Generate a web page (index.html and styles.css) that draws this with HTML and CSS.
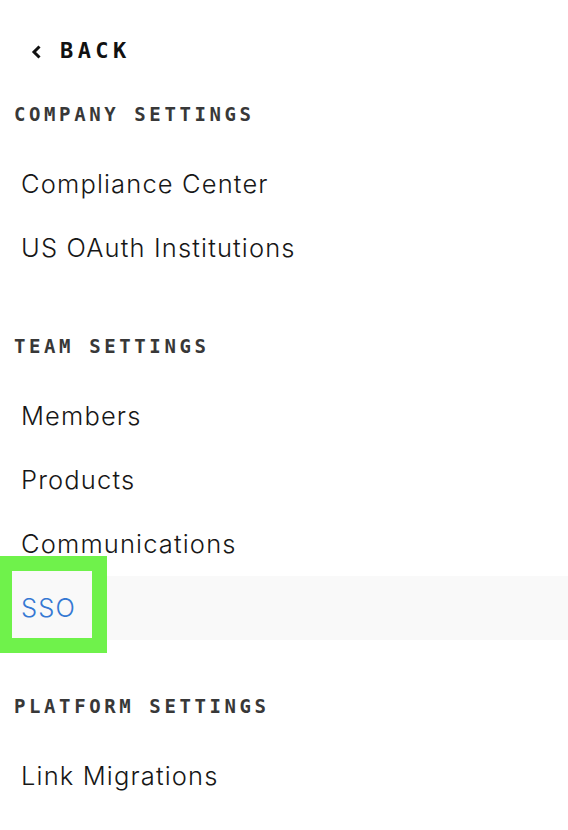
FILE: index.html
```html
<!DOCTYPE html>
<html lang="en">
<head>
<meta charset="utf-8">
<title>Settings</title>
<link rel="stylesheet" href="styles.css">
</head>
<body>
<nav class="sidebar">
  <a class="back" href="#">
    <svg class="back-icon" width="12" height="14" viewBox="0 0 12 14" aria-hidden="true">
      <polyline points="8.5,1.5 3,7 8.5,12.5" fill="none" stroke="#111" stroke-width="3" stroke-linecap="butt" stroke-linejoin="miter"/>
    </svg>
    <span>BACK</span>
  </a>

  <section class="group group-first">
    <h2 class="group-title">COMPANY SETTINGS</h2>
    <ul class="items">
      <li class="item"><a href="#">Compliance Center</a></li>
      <li class="item"><a href="#">US OAuth Institutions</a></li>
    </ul>
  </section>

  <section class="group">
    <h2 class="group-title">TEAM SETTINGS</h2>
    <ul class="items">
      <li class="item"><a href="#">Members</a></li>
      <li class="item"><a href="#">Products</a></li>
      <li class="item"><a href="#">Communications</a></li>
      <li class="item item-active"><span class="highlight" aria-hidden="true"></span><a href="#">SSO</a></li>
    </ul>
  </section>

  <section class="group">
    <h2 class="group-title">PLATFORM SETTINGS</h2>
    <ul class="items">
      <li class="item"><a href="#">Link Migrations</a></li>
    </ul>
  </section>
</nav>
</body>
</html>
```

FILE: styles.css
```css
html, body {
  margin: 0;
  padding: 0;
  background: #ffffff;
}

body {
  font-family: "Inter", "Liberation Sans", sans-serif;
  color: #1c1c1c;
  width: 568px;
  height: 830px;
  overflow: hidden;
}

a {
  text-decoration: none;
  color: inherit;
}

.sidebar {
  display: flex;
  flex-direction: column;
}

.back {
  display: flex;
  align-items: center;
  height: 99px;
  padding-top: 2px;
  box-sizing: border-box;
  padding-left: 31px;
  gap: 17px;
  font-family: "DejaVu Sans Mono", "Liberation Mono", monospace;
  font-weight: bold;
  font-size: 22px;
  letter-spacing: 4.4px;
  color: #111111;
}

.back-icon {
  display: block;
  margin-top: 2px;
}

.group {
  margin-top: 51px;
}

.group-first {
  margin-top: 0;
}

.group-title {
  margin: 0 0 23px 0;
  padding-left: 14px;
  height: 30px;
  line-height: 30px;
  font-family: "DejaVu Sans Mono", "Liberation Mono", monospace;
  font-weight: bold;
  font-size: 19px;
  letter-spacing: 3.6px;
  color: #383838;
}

.items {
  list-style: none;
  margin: 0;
  padding: 0;
}

.item {
  position: relative;
  height: 64px;
  line-height: 64px;
  padding-left: 21px;
  font-size: 25.5px;
  font-weight: 300;
  letter-spacing: 1.15px;
  color: #171717;
}

.item a {
  position: relative;
  z-index: 1;
}

.item-active {
  background: #f9f9f9;
}

.item-active a {
  color: #3578d3;
}

.highlight {
  position: absolute;
  left: -3px;
  top: -20px;
  width: 80px;
  height: 67px;
  border: 15px solid #6ff24b;
  background: #f9f9f9;
  z-index: 0;
}
```
